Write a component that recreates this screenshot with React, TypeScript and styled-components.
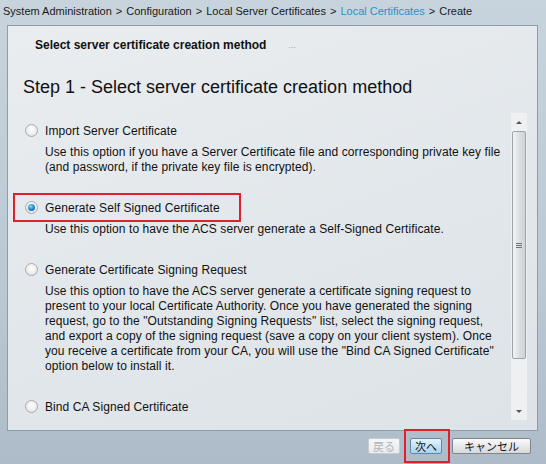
import React from "react";
import styled, { createGlobalStyle, css } from "styled-components";

const GlobalStyle = createGlobalStyle`
  html, body {
    margin: 0;
    padding: 0;
  }
  body {
    font-family: "Liberation Sans", Arial, "Noto Sans CJK JP", sans-serif;
    color: #111;
  }
`;

// Types

type Option = {
  label: string;
  description?: string;
  selected?: boolean;
};

// Data

const options: Option[] = [
  {
    label: "Import Server Certificate",
    description:
      "Use this option if you have a Server Certificate file and corresponding private key file (and password, if the private key file is encrypted).",
  },
  {
    label: "Generate Self Signed Certificate",
    description:
      "Use this option to have the ACS server generate a Self-Signed Certificate.",
    selected: true,
  },
  {
    label: "Generate Certificate Signing Request",
    description:
      'Use this option to have the ACS server generate a certificate signing request to present to your local Certificate Authority. Once you have generated the signing request, go to the "Outstanding Signing Requests" list, select the signing request, and export a copy of the signing request (save a copy on your client system). Once you receive a certificate from your CA, you will use the "Bind CA Signed Certificate" option below to install it.',
  },
  { label: "Bind CA Signed Certificate" },
];

const crumbs = [
  "System Administration",
  "Configuration",
  "Local Server Certificates",
  "Local Certificates",
  "Create",
];

// Styled Components

const Page = styled.div`
  width: 546px;
  height: 464px;
  display: flex;
  flex-direction: column;
  overflow: hidden;
  background: linear-gradient(180deg, #c7d4dd 0%, #bac9d4 60%, #adbcc8 100%);
`;

const Breadcrumb = styled.div`
  height: 25px;
  padding: 4px 0 0 3px;
  box-sizing: border-box;
  font-size: 11px;
  line-height: 14px;
  color: #1a1a1a;
  white-space: nowrap;
`;

const Crumb = styled.span<{ $link?: boolean }>`
  color: ${(p) => (p.$link ? "#2e8fc6" : "#1a1a1a")};
`;

const Sep = styled.span`
  margin: 0 4px;
`;

const Panel = styled.div`
  margin: 0 8px 0 7px;
  height: 404px;
  border: 1px solid #8d9dab;
  background: linear-gradient(160deg, #e9edf0 0%, #e2e7eb 55%, #dde3e8 100%);
  display: flex;
  flex-direction: column;
`;

const PanelHeader = styled.div`
  height: 37px;
  display: flex;
  align-items: center;
  padding: 0 0 0 27px;
  font-size: 12px;
  font-weight: bold;
  color: #111;
`;

const Ellipsis = styled.span`
  margin-left: 22px;
  font-size: 9px;
  font-weight: normal;
  color: #9aa3aa;
`;

const StepTitle = styled.h2`
  margin: 0;
  height: 50px;
  padding: 13px 0 0 15px;
  box-sizing: border-box;
  font-size: 18px;
  line-height: 22px;
  font-weight: normal;
  color: #111;
`;

const ScrollArea = styled.div`
  height: 307px;
  display: flex;
  padding-right: 10px;
`;

const Content = styled.div`
  flex: 1;
  overflow: hidden;
  padding: 10px 7px 0 17px;
  display: flex;
  flex-direction: column;
  gap: 25px;
  letter-spacing: 0.08px;
`;

const OptionBlock = styled.div`
  display: flex;
  flex-direction: column;
  gap: 7px;
`;

const OptionRow = styled.label<{ $highlight?: boolean }>`
  position: relative;
  display: flex;
  align-items: center;
  gap: 7px;
  height: 15px;
  font-size: 12px;
  color: #111;

  ${(p) =>
    p.$highlight &&
    css`
      &::after {
        content: "";
        position: absolute;
        left: -12px;
        top: -7px;
        width: 228px;
        height: 29px;
        box-sizing: border-box;
        border: 2px solid #e0202c;
      }
    `}
`;

const Radio = styled.span<{ $checked?: boolean }>`
  width: 13px;
  height: 13px;
  border-radius: 50%;
  box-sizing: border-box;
  border: 1px solid #a9adb1;
  background: radial-gradient(circle at 50% 40%, #ffffff 0%, #eceef0 55%, #d2d6da 100%);
  display: flex;
  align-items: center;
  justify-content: center;

  ${(p) =>
    p.$checked &&
    css`
      &::before {
        content: "";
        width: 7px;
        height: 7px;
        border-radius: 50%;
        background: radial-gradient(circle at 40% 35%, #8ad6f7 0%, #1e82c2 55%, #0d4f86 100%);
      }
    `}
`;

const Description = styled.p`
  margin: 0 0 0 20px;
  font-size: 12px;
  line-height: 15px;
  color: #111;
`;

const Scrollbar = styled.div`
  width: 16px;
  display: flex;
  flex-direction: column;
  align-items: center;
  background: #eef0f2;
`;

const Arrow = styled.div<{ $down?: boolean }>`
  height: 18px;
  width: 16px;
  display: flex;
  align-items: center;
  justify-content: center;

  &::before {
    content: "";
    border-left: 3px solid transparent;
    border-right: 3px solid transparent;
    ${(p) =>
      p.$down
        ? "border-top: 3px solid #555;"
        : "border-bottom: 3px solid #555;"}
  }
`;

const Thumb = styled.div`
  width: 14px;
  height: 228px;
  box-sizing: border-box;
  border: 1px solid #9ea3a8;
  border-radius: 2px;
  background: linear-gradient(90deg, #f2f3f4 0%, #dcdfe2 50%, #cfd3d7 100%);
  display: flex;
  align-items: center;
  justify-content: center;
`;

const Grip = styled.div`
  width: 6px;
  height: 5px;
  background: repeating-linear-gradient(180deg, #6f7478 0 1px, transparent 1px 2px);
`;

const Track = styled.div`
  flex: 1;
`;

const Footer = styled.div`
  flex: 1;
  display: flex;
  justify-content: flex-end;
  align-items: flex-start;
  gap: 10px;
  padding: 7px 15px 0 0;
`;

const Button = styled.button<{ $variant?: "primary" | "disabled"; $wide?: boolean }>`
  position: relative;
  height: 16px;
  padding: 0 ${(p) => (p.$wide ? "11px" : "4px")};
  box-sizing: border-box;
  font-family: "Noto Sans CJK JP", "Liberation Sans", sans-serif;
  font-size: 11px;
  line-height: 14px;
  color: #111;
  border: 1px solid #7f858a;
  border-radius: 2px;
  background: linear-gradient(180deg, #fafafa 0%, #e8e9ea 50%, #d6d8da 100%);

  ${(p) =>
    p.$variant === "primary" &&
    css`
      border-color: #5f88aa;
      background: linear-gradient(180deg, #e6f4fc 0%, #c3e3f7 50%, #a6d4f1 100%);

      &::after {
        content: "";
        position: absolute;
        left: -7px;
        top: -10px;
        width: 46px;
        height: 34px;
        box-sizing: border-box;
        border: 2px solid #e0202c;
      }
    `}

  ${(p) =>
    p.$variant === "disabled" &&
    css`
      color: #b2b6b9;
      border-color: #c7cbce;
      background: linear-gradient(180deg, #f5f6f7 0%, #e9ebec 100%);
    `}
`;

// Functional Components

const OptionItem = ({ label, description, selected }: Option) => (
  <OptionBlock>
    <OptionRow $highlight={selected}>
      <Radio $checked={selected} />
      {label}
    </OptionRow>
    {description && <Description>{description}</Description>}
  </OptionBlock>
);

export default function App() {
  return (
    <>
      <GlobalStyle />
      <Page>
        <Breadcrumb>
          {crumbs.map((c, i) => (
            <React.Fragment key={c}>
              {i > 0 && <Sep>&gt;</Sep>}
              <Crumb $link={c === "Local Certificates"}>{c}</Crumb>
            </React.Fragment>
          ))}
        </Breadcrumb>
        <Panel>
          <PanelHeader>
            Select server certificate creation method
            <Ellipsis>...</Ellipsis>
          </PanelHeader>
          <StepTitle>Step 1 - Select server certificate creation method</StepTitle>
          <ScrollArea>
            <Content>
              {options.map((o) => (
                <OptionItem key={o.label} {...o} />
              ))}
            </Content>
            <Scrollbar>
              <Arrow />
              <Thumb>
                <Grip />
              </Thumb>
              <Track />
              <Arrow $down />
            </Scrollbar>
          </ScrollArea>
        </Panel>
        <Footer>
          <Button $variant="disabled">戻る</Button>
          <Button $variant="primary">次へ</Button>
          <Button $wide>キャンセル</Button>
        </Footer>
      </Page>
    </>
  );
}
